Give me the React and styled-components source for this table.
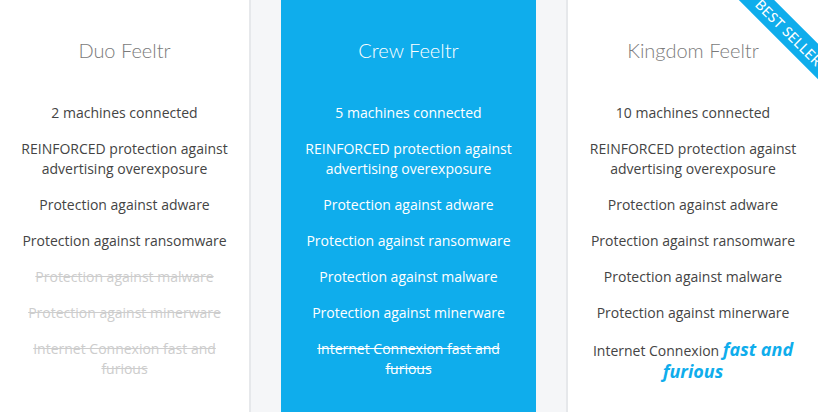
import React from 'react';
import styled, { createGlobalStyle } from 'styled-components';

const Global = createGlobalStyle`
  html, body { margin: 0; padding: 0; background: #f5f6f8; overflow: hidden; }
  body { font-family: "Open Sans", sans-serif; }
`;

const Row = styled.div`
  display: flex;
  gap: 30px;
  height: 412px;
  align-items: stretch;
`;

const Card = styled.section`
  position: relative;
  overflow: hidden;
  box-sizing: border-box;
  flex: none;
  width: ${p => p.$w}px;
  padding: 36px 15px 0;
  text-align: center;
  background: ${p => (p.$featured ? '#0fadec' : '#ffffff')};
  color: ${p => (p.$featured ? '#ffffff' : '#444444')};
  border-left: ${p => (p.$side === 'left' ? '2px solid #e6e8eb' : 'none')};
  border-right: ${p => (p.$side === 'right' ? '2px solid #e6e8eb' : 'none')};
`;

const Title = styled.h2`
  margin: 0 0 39px;
  font-family: "Lato", "Open Sans", sans-serif;
  font-weight: 300;
  font-size: 20px;
  line-height: 28px;
  color: ${p => (p.$featured ? '#ffffff' : '#7b7b7b')};
`;

const List = styled.ul`
  list-style: none;
  margin: 0;
  padding: 0;
  display: flex;
  flex-direction: column;
  gap: 16px;
`;

const Item = styled.li`
  font-size: 14px;
  line-height: 20px;
  color: ${p => (p.$off ? (p.$featured ? '#ffffff' : '#cdcdcd') : 'inherit')};
  text-decoration: ${p => (p.$off ? 'line-through' : 'none')};
`;

const Highlight = styled.strong`
  font-style: italic;
  font-weight: 700;
  font-size: 18px;
  color: #0fadec;
`;

const Ribbon = styled.div`
  position: absolute;
  width: 200px;
  height: 25px;
  left: 121px;
  top: 20px;
  transform: rotate(45deg);
  background: #0fadec;
  color: #ffffff;
  font-family: "Lato", "Open Sans", sans-serif;
  font-size: 14px;
  line-height: 25px;
  text-align: center;
  text-transform: uppercase;
  letter-spacing: 0.4px;
`;

const features = [
  'REINFORCED protection against advertising overexposure',
  'Protection against adware',
  'Protection against ransomware',
  'Protection against malware',
  'Protection against minerware',
];

const plans = [
  { name: 'Duo Feeltr', machines: 2, w: 251, side: 'right', offFrom: 3, netOff: true },
  { name: 'Crew Feeltr', machines: 5, w: 255, featured: true, offFrom: 99, netOff: true },
  { name: 'Kingdom Feeltr', machines: 10, w: 252, side: 'left', offFrom: 99, best: true },
];

export default function App() {
  return (
    <>
      <Global />
      <Row>
        {plans.map(p => (
          <Card key={p.name} $w={p.w} $side={p.side} $featured={p.featured}>
            {p.best && <Ribbon>Best Seller</Ribbon>}
            <Title $featured={p.featured}>{p.name}</Title>
            <List>
              <Item>{p.machines} machines connected</Item>
              {features.map((f, i) => (
                <Item key={f} $off={i >= p.offFrom} $featured={p.featured}>{f}</Item>
              ))}
              {p.netOff ? (
                <Item $off $featured={p.featured}>Internet Connexion fast and furious</Item>
              ) : (
                <Item>Internet Connexion <Highlight>fast and furious</Highlight></Item>
              )}
            </List>
          </Card>
        ))}
      </Row>
    </>
  );
}
